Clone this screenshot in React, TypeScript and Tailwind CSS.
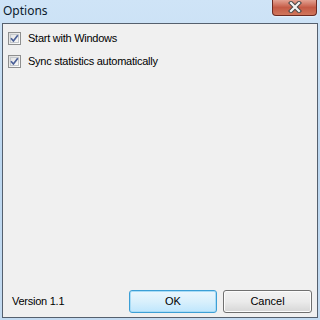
import React from 'react';

const Check: React.FC<{ label: string }> = ({ label }) => (
  <label className="flex items-center gap-[7px] h-[13px]">
    <span className="relative w-[13px] h-[13px] border border-[#8e8f8f] bg-gradient-to-br from-[#dcdcdc] to-[#ffffff] flex items-center justify-center">
      <span className="absolute inset-[1px] border border-[#c4c8cc] bg-gradient-to-br from-[#e4e4e4] to-[#f8f8f8]" />
      <svg viewBox="0 0 11 11" className="relative w-[11px] h-[11px]">
        <path d="M2 5.2 L4.4 8 L8.8 2.2" fill="none" stroke="#4a5f97" strokeWidth="1.7" />
      </svg>
    </span>
    <span className="text-[11px] text-black leading-none tracking-[-0.25px]">{label}</span>
  </label>
);

export default function App() {
  return (
    <div
      className="w-[320px] h-[320px] flex flex-col px-[2px] pb-[2px] bg-gradient-to-b from-[#cfe4f7] via-[#bcd7f0] to-[#c4dbf1]"
      style={{ fontFamily: '"Liberation Sans", Arial, sans-serif' }}
    >
      <div className="h-[23px] flex items-start justify-between">
        <span
          className="text-[12px] text-[#0b1a2c] pt-[3px] pl-[1px] leading-[16px]"
          style={{ fontFamily: '"Noto Sans", "Open Sans", sans-serif' }}
        >
          Options
        </span>
        <div className="w-[45px] h-[16px] mr-[1px] rounded-b-[4px] border border-t-0 border-[#6b2a22] bg-gradient-to-b from-[#e3a293] via-[#c45a45] to-[#d0765c] flex items-center justify-center shadow-[0_1px_2px_rgba(255,255,255,0.6)]">
          <svg viewBox="0 0 14 12" className="w-[14px] h-[12px] -mt-[1px]">
            <path d="M3 2 L11 10 M11 2 L3 10" stroke="#4a4a4a" strokeWidth="4.2" strokeLinecap="square" />
            <path d="M3 2 L11 10 M11 2 L3 10" stroke="#f4f4f4" strokeWidth="2.2" strokeLinecap="square" />
          </svg>
        </div>
      </div>
      <div className="flex-1 border border-[#55606e] bg-[#f0f0f0] flex flex-col">
        <div className="flex flex-col gap-[10px] pt-[8px] pl-[5px]">
          <Check label="Start with Windows" />
          <Check label="Sync statistics automatically" />
        </div>
        <div className="mt-auto flex items-center pb-[4px]">
          <span className="text-[11px] text-black pl-[9px] flex-1 tracking-[-0.25px]">Version 1.1</span>
          <button className="w-[88px] h-[23px] rounded-[3px] border border-[#3c9fd6] bg-gradient-to-b from-[#eaf6fd] via-[#d9f0fc] to-[#bee6fd] text-[11px] text-black shadow-[inset_0_0_0_1px_#a9dcf6]">
            OK
          </button>
          <button className="w-[89px] h-[23px] ml-[6px] mr-[5px] rounded-[3px] border border-[#707070] bg-gradient-to-b from-[#f2f2f2] via-[#ebebeb] to-[#d6d6d6] text-[11px] text-black shadow-[inset_0_0_0_1px_#fcfcfc]">
            Cancel
          </button>
        </div>
      </div>
    </div>
  );
}
